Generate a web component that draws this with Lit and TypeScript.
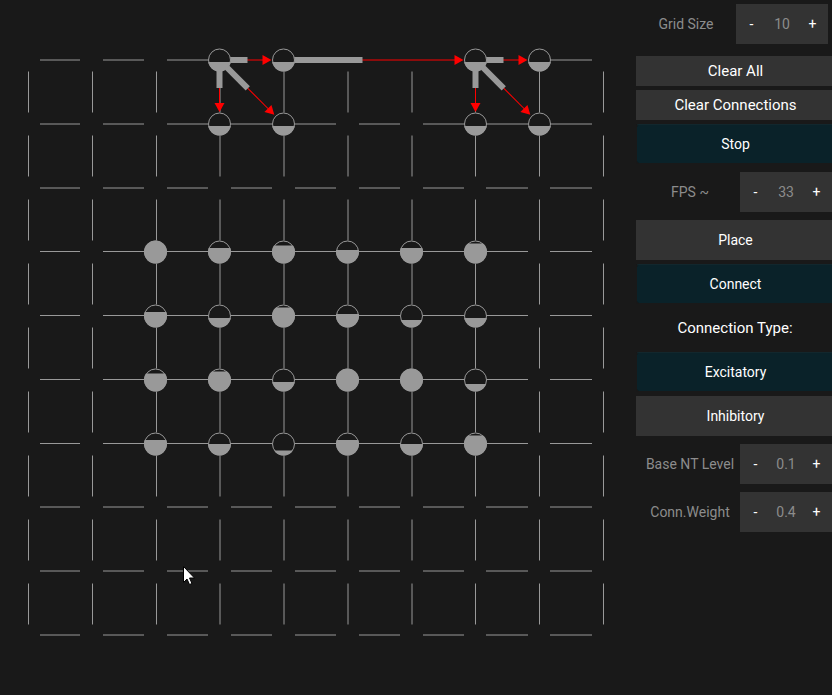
import { LitElement, html, svg, css } from "lit";
import { customElement, property, state } from "lit/decorators.js";
import { classMap } from "lit/directives/class-map.js";

const COLS = [28.5, 92.5, 156.5, 220, 284, 348, 412, 475.5, 539.5, 603.5];
const ROWS = [60, 124, 188, 251.5, 315.5, 379.5, 443.5, 507, 571, 635];

// Centre of the neuron at a grid position
const nodeX = (col: number) => 27.5 + col * 64;
const nodeY = (row: number) => 60 + row * 64;

// [column, row, offset of the charge level from the centre]
const NEURONS: [number, number, number][] = [
  [3, 0, 2], [4, 0, 2], [7, 0, 2], [8, 0, 2],
  [3, 1, 2], [4, 1, 2], [7, 1, 2], [8, 1, 2],
  [2, 3, -12], [3, 3, -4], [4, 3, -6], [5, 3, -2], [6, 3, -4], [7, 3, -8],
  [2, 4, -4], [3, 4, 2], [4, 4, -8], [5, 4, -2], [6, 4, 4], [7, 4, 2],
  [2, 5, -6], [3, 5, -8], [4, 5, 2], [5, 5, -12], [6, 5, -12], [7, 5, 4],
  [2, 6, -4], [3, 6, 0], [4, 6, 7], [5, 6, -4], [6, 6, 0], [7, 6, -8],
];

// [from column, from row, to column, to row, length of the weight bar]
const LINKS: [number, number, number, number, number][] = [
  [3, 0, 4, 0, 28], [3, 0, 3, 1, 28], [3, 0, 4, 1, 40],
  [4, 0, 7, 0, 79],
  [7, 0, 8, 0, 28], [7, 0, 7, 1, 28], [7, 0, 8, 1, 40],
];

// A horizontal connection takes the place of the grid lines on its way
const covered = (col: number, row: number) =>
  LINKS.some(([c1, r1, c2, r2]) => r1 === row && r2 === row && col >= c1 && col < c2);

@customElement("neuron-grid")
export class NeuronGrid extends LitElement {
  static styles = css`
    :host { display: block; }
    .canvas { display: block; width: 100%; height: auto; }
    .line { stroke: #999; stroke-width: 1; }
    .wire { stroke: #f00; stroke-width: 1; }
    .weight { stroke: #999; stroke-width: 6; }
    .head { fill: #f00; }
    .body { fill: #191919; }
    .charge { fill: #999; }
    .edge { fill: #595959; }
    .ring { fill: none; stroke: #999; stroke-width: 1; }
    .cursor { fill: #fff; stroke: #000; stroke-width: 1; }
  `;

  private gridLines() {
    const lines = [];
    for (let row = 0; row < ROWS.length; row++)
      for (let i = 0; i < 9; i++)
        if (!covered(i, row))
          lines.push(svg`<line class="line" x1=${Math.floor(COLS[i]) + (i ? 11 : 12)} x2=${80 + 64 * i} y1=${ROWS[row]} y2=${ROWS[row]} />`);
    for (const x of COLS)
      for (let i = 0; i < 9; i++)
        lines.push(svg`<line class="line" x1=${x} x2=${x} y1=${nodeY(i) + 11.5} y2=${nodeY(i + 1) - 11.5} />`);
    return lines;
  }

  private link([c1, r1, c2, r2, bar]: (typeof LINKS)[number]) {
    const dx = nodeX(c2) - nodeX(c1);
    const dy = nodeY(r2) - nodeY(r1);
    const length = Math.hypot(dx, dy);
    const angle = (Math.atan2(dy, dx) * 180) / Math.PI;
    const tip = length - (dx && dy ? 13 : 12);
    return svg`<g transform="translate(${nodeX(c1)} ${nodeY(r1)}) rotate(${angle})">
      <line class="wire" x1="0" x2=${tip - 4} y1="0" y2="0" />
      <line class="weight" x1="0" x2=${bar} y1="0" y2="0" />
      <path class="head" d="M${tip} 0l-9 -5v10z" />
    </g>`;
  }

  private neuron([col, row, level]: (typeof NEURONS)[number], i: number) {
    const x = nodeX(col);
    const y = nodeY(row);
    const soft = Math.abs(level) > 5;
    return svg`
      <clipPath id="n${i}"><circle cx=${x} cy=${y} r="11.5" /></clipPath>
      <circle class="body" cx=${x} cy=${y} r="11" />
      <g clip-path="url(#n${i})">
        ${soft ? svg`<rect class="edge" x=${x - 12} y=${y + level - 1} width="24" height="1" />` : null}
        <rect class="charge" x=${x - 12} y=${y + level} width="24" height=${12 - level} />
      </g>
      <circle class="ring" cx=${x} cy=${y} r="11" />`;
  }

  render() {
    return html`<svg class="canvas" viewBox="0 0 636 660" role="img" aria-label="Neuron grid">
      ${this.gridLines()}
      ${LINKS.map((l) => this.link(l))}
      ${NEURONS.map((n, i) => this.neuron(n, i))}
      <path class="cursor" d="M183.5 566.5V582.5L187 579L189.5 584.5L192 583.5L189.5 578H194.5Z" />
    </svg>`;
  }
}

@customElement("value-stepper")
export class ValueStepper extends LitElement {
  @property() label = "";
  @property({ type: Number }) value = 0;
  @property({ type: Number }) step = 1;

  static styles = css`
    :host { display: flex; align-items: center; height: 40px; }
    .label { flex: 1; text-align: center; color: #8c8c8c; white-space: nowrap; }
    .box { display: grid; grid-template-columns: 31px 30px 31px; height: 40px; background: #333; }
    .key, .value { font: inherit; border: 0; padding: 0; margin: 0; background: none; text-align: center; min-width: 0; }
    .key { color: #fff; }
    .value { color: #8c8c8c; }
  `;

  private change(by: number) {
    this.value = Number((this.value + by * this.step).toFixed(2));
  }

  render() {
    return html`<label class="label" for="value">${this.label}</label>
      <div class="box">
        <button class="key" aria-label="Decrease" @click=${() => this.change(-1)}>-</button>
        <input class="value" id="value" type="text" .value=${String(this.value)} />
        <button class="key" aria-label="Increase" @click=${() => this.change(1)}>+</button>
      </div>`;
  }
}

@customElement("app-root")
export class AppRoot extends LitElement {
  @state() private running = true;
  @state() private mode = "Connect";
  @state() private kind = "Excitatory";

  static styles = css`
    :host {
      display: flex;
      min-height: 100vh;
      overflow: hidden;
      background: #191919;
      color: #fff;
      font: 14px/20px Roboto, "Liberation Sans", sans-serif;
    }
    .grid { flex: 1; min-width: 0; }
    .panel { flex: 0 0 200px; margin-right: -4px; padding-top: 4px; box-sizing: border-box; }
    .size { margin: 0 8px 12px 0; }
    .stepper { margin: 8px 4px 8px 4px; }
    .button {
      display: block;
      width: 100%;
      height: 40px;
      margin: 0 0 4px;
      padding: 0 1px 0 0;
      border: 0;
      background: #333;
      color: #fff;
      font: inherit;
    }
    .short { height: 30px; font-size: 15px; }
    .on {
      background: #0a2229;
      background-clip: padding-box;
      border: 1px solid #191919;
      border-top-color: #12272d;
      border-radius: 3px;
    }
    .title { margin: 0; padding-right: 2px; height: 44px; font-size: 15px; font-weight: 400; line-height: 40px; text-align: center; }
  `;

  private toggle(text: string, on: boolean, pick: () => void) {
    return html`<button class=${classMap({ button: true, on })} aria-pressed=${on} @click=${pick}>${text}</button>`;
  }

  render() {
    return html`<neuron-grid class="grid"></neuron-grid>
      <aside class="panel">
        <value-stepper class="size" label="Grid Size" value="10"></value-stepper>
        <button class="button short">Clear All</button>
        <button class="button short">Clear Connections</button>
        ${this.toggle("Stop", this.running, () => (this.running = !this.running))}
        <value-stepper class="stepper" label="FPS ~" value="33"></value-stepper>
        ${this.toggle("Place", this.mode === "Place", () => (this.mode = "Place"))}
        ${this.toggle("Connect", this.mode === "Connect", () => (this.mode = "Connect"))}
        <h2 class="title">Connection Type:</h2>
        ${this.toggle("Excitatory", this.kind === "Excitatory", () => (this.kind = "Excitatory"))}
        ${this.toggle("Inhibitory", this.kind === "Inhibitory", () => (this.kind = "Inhibitory"))}
        <value-stepper class="stepper" label="Base NT Level" value="0.1" step="0.1"></value-stepper>
        <value-stepper class="stepper" label="Conn.Weight" value="0.4" step="0.1"></value-stepper>
      </aside>`;
  }
}
